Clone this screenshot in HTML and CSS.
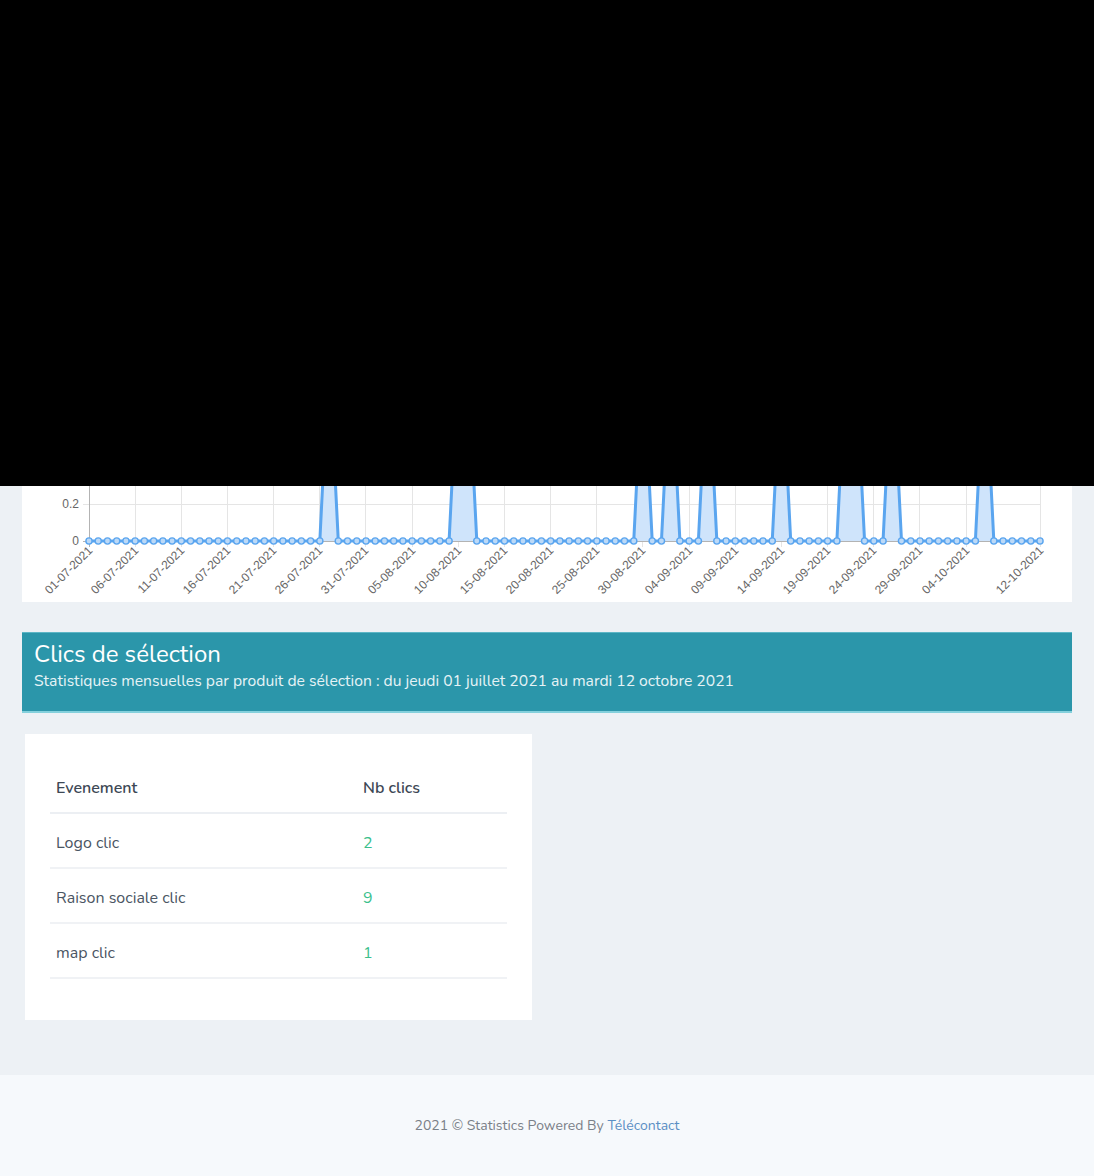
FILE: index.html
```html
<!DOCTYPE html>
<html lang="fr">
<head>
<meta charset="utf-8">
<title>Statistiques</title>
<link rel="stylesheet" href="styles.css">
</head>
<body>
<div class="mask"></div>
<main class="content">
  <section class="chart-card">
    <svg class="chart" width="1050" height="116" viewBox="22 486 1050 116" xmlns="http://www.w3.org/2000/svg">
      <defs>
        <marker id="pt" viewBox="0 0 10 10" refX="5" refY="5" markerWidth="10" markerHeight="10" markerUnits="userSpaceOnUse">
          <circle cx="5" cy="5" r="3.1" fill="#bcd9f7" stroke="#5aa5ef" stroke-width="1.4"/>
        </marker>
      </defs>
      <g class="grid">
        <line x1="89" y1="504.5" x2="1040" y2="504.5"/>
        <line x1="89" y1="467.5" x2="1040" y2="467.5"/>
        <line x1="83" y1="504.5" x2="89" y2="504.5"/>
        <line x1="83" y1="467.5" x2="89" y2="467.5"/>
        <line x1="135.5" y1="440" x2="135.5" y2="547"/>
        <line x1="181.5" y1="440" x2="181.5" y2="547"/>
        <line x1="227.5" y1="440" x2="227.5" y2="547"/>
        <line x1="273.5" y1="440" x2="273.5" y2="547"/>
        <line x1="319.5" y1="440" x2="319.5" y2="547"/>
        <line x1="365.5" y1="440" x2="365.5" y2="547"/>
        <line x1="412.5" y1="440" x2="412.5" y2="547"/>
        <line x1="458.5" y1="440" x2="458.5" y2="547"/>
        <line x1="504.5" y1="440" x2="504.5" y2="547"/>
        <line x1="550.5" y1="440" x2="550.5" y2="547"/>
        <line x1="596.5" y1="440" x2="596.5" y2="547"/>
        <line x1="642.5" y1="440" x2="642.5" y2="547"/>
        <line x1="689.5" y1="440" x2="689.5" y2="547"/>
        <line x1="735.5" y1="440" x2="735.5" y2="547"/>
        <line x1="781.5" y1="440" x2="781.5" y2="547"/>
        <line x1="827.5" y1="440" x2="827.5" y2="547"/>
        <line x1="873.5" y1="440" x2="873.5" y2="547"/>
        <line x1="919.5" y1="440" x2="919.5" y2="547"/>
        <line x1="966.5" y1="440" x2="966.5" y2="547"/>
        <line x1="1040.5" y1="440" x2="1040.5" y2="547"/>
      </g>
      <g class="axis">
        <line x1="89.5" y1="440" x2="89.5" y2="547"/>
        <line x1="83" y1="541.5" x2="1040" y2="541.5"/>
      </g>
      <polygon class="area" points="89,541 319.83,541 329.06,356 338.29,541 449.09,541 458.32,356 467.55,356 476.79,541 633.75,541 642.98,356 652.21,541 661.45,541 670.68,356 679.91,541 698.38,541 707.61,356 716.84,541 772.24,541 781.48,356 790.71,541 836.87,541 846.11,356 855.34,356 864.57,541 883.04,541 892.27,356 901.50,541 975.37,541 984.60,356 993.83,541 1040,541"/>
      <polyline class="line" marker-start="url(#pt)" marker-mid="url(#pt)" marker-end="url(#pt)" points="89.00,541 98.23,541 107.47,541 116.70,541 125.93,541 135.17,541 144.40,541 153.63,541 162.86,541 172.10,541 181.33,541 190.56,541 199.80,541 209.03,541 218.26,541 227.50,541 236.73,541 245.96,541 255.19,541 264.43,541 273.66,541 282.89,541 292.13,541 301.36,541 310.59,541 319.83,541 329.06,356 338.29,541 347.52,541 356.76,541 365.99,541 375.22,541 384.46,541 393.69,541 402.92,541 412.16,541 421.39,541 430.62,541 439.85,541 449.09,541 458.32,356 467.55,356 476.79,541 486.02,541 495.25,541 504.49,541 513.72,541 522.95,541 532.18,541 541.42,541 550.65,541 559.88,541 569.12,541 578.35,541 587.58,541 596.82,541 606.05,541 615.28,541 624.51,541 633.75,541 642.98,356 652.21,541 661.45,541 670.68,356 679.91,541 689.15,541 698.38,541 707.61,356 716.84,541 726.08,541 735.31,541 744.54,541 753.78,541 763.01,541 772.24,541 781.48,356 790.71,541 799.94,541 809.17,541 818.41,541 827.64,541 836.87,541 846.11,356 855.34,356 864.57,541 873.81,541 883.04,541 892.27,356 901.50,541 910.74,541 919.97,541 929.20,541 938.44,541 947.67,541 956.90,541 966.14,541 975.37,541 984.60,356 993.83,541 1003.07,541 1012.30,541 1021.53,541 1030.77,541 1040.00,541"/>
      <g class="ylabels">
        <text x="79" y="505">0.2</text>
        <text x="79" y="542">0</text>
      </g>
      <g class="xlabels">
        <text x="91" y="549" transform="rotate(-45 91 549)">01-07-2021</text>
        <text x="137" y="549" transform="rotate(-45 137 549)">06-07-2021</text>
        <text x="183" y="549" transform="rotate(-45 183 549)">11-07-2021</text>
        <text x="229" y="549" transform="rotate(-45 229 549)">16-07-2021</text>
        <text x="275" y="549" transform="rotate(-45 275 549)">21-07-2021</text>
        <text x="321" y="549" transform="rotate(-45 321 549)">26-07-2021</text>
        <text x="367" y="549" transform="rotate(-45 367 549)">31-07-2021</text>
        <text x="414" y="549" transform="rotate(-45 414 549)">05-08-2021</text>
        <text x="460" y="549" transform="rotate(-45 460 549)">10-08-2021</text>
        <text x="506" y="549" transform="rotate(-45 506 549)">15-08-2021</text>
        <text x="552" y="549" transform="rotate(-45 552 549)">20-08-2021</text>
        <text x="598" y="549" transform="rotate(-45 598 549)">25-08-2021</text>
        <text x="644" y="549" transform="rotate(-45 644 549)">30-08-2021</text>
        <text x="691" y="549" transform="rotate(-45 691 549)">04-09-2021</text>
        <text x="737" y="549" transform="rotate(-45 737 549)">09-09-2021</text>
        <text x="783" y="549" transform="rotate(-45 783 549)">14-09-2021</text>
        <text x="829" y="549" transform="rotate(-45 829 549)">19-09-2021</text>
        <text x="875" y="549" transform="rotate(-45 875 549)">24-09-2021</text>
        <text x="921" y="549" transform="rotate(-45 921 549)">29-09-2021</text>
        <text x="968" y="549" transform="rotate(-45 968 549)">04-10-2021</text>
        <text x="1042" y="549" transform="rotate(-45 1042 549)">12-10-2021</text>
      </g>
    </svg>
  </section>

  <section class="section-head">
    <h2 class="section-title">Clics de sélection</h2>
    <p class="section-sub">Statistiques mensuelles par produit de sélection : du jeudi 01 juillet 2021 au mardi 12 octobre 2021</p>
  </section>

  <div class="row">
    <div class="table-card">
      <table class="stats">
        <thead>
          <tr><th class="col-event">Evenement</th><th>Nb clics</th></tr>
        </thead>
        <tbody>
          <tr><td>Logo clic</td><td class="num">2</td></tr>
          <tr><td>Raison sociale clic</td><td class="num">9</td></tr>
          <tr><td>map clic</td><td class="num">1</td></tr>
        </tbody>
      </table>
    </div>
  </div>
</main>
<footer class="footer">
  <p>2021 © Statistics Powered By <a href="#" class="footer-link">Télécontact</a></p>
</footer>
</body>
</html>
```
FILE: styles.css
```css
* { box-sizing: border-box; }
html, body { margin: 0; padding: 0; }
body {
  background: #edf1f5;
  font-family: "Nunito", "Lato", "Noto Sans", sans-serif;
  color: #4b5563;
}
.mask { height: 486px; background: #000; }
.content { padding: 0 22px; }
.chart-card { background: #fff; height: 116px; }
.chart { display: block; }
.grid line { stroke: #e5e5e5; stroke-width: 1; }
.axis line { stroke: #b3b3b3; stroke-width: 1; }
.area { fill: #cfe4fb; }
.line { fill: none; stroke: #5aa5ef; stroke-width: 3; stroke-linejoin: miter; }
.ylabels text {
  font-family: "Liberation Sans", Arial, sans-serif;
  font-size: 12px; fill: #666; text-anchor: end; dominant-baseline: middle;
}
.xlabels text {
  font-family: "Liberation Sans", Arial, sans-serif;
  font-size: 12px; fill: #666; text-anchor: end; dominant-baseline: middle;
}
.section-head {
  margin-top: 30px;
  background: #2b96aa;
  border-top: 1px solid #5cb6c6;
  border-bottom: 2px solid #84d0dc;
  height: 81px;
  padding: 6px 12px 0;
  color: #fff;
}
.section-title {
  margin: 0;
  font-size: 24px;
  font-weight: 400;
  line-height: 30px;
}
.section-sub {
  margin: 2px 0 0;
  font-size: 15.7px;
  line-height: 20px;
  color: #e6f3f6;
}
.row { display: flex; padding: 21px 0 55px 3px; }
.table-card {
  width: 507px;
  background: #fff;
  padding: 24px 25px 41px;
}
.stats { width: 100%; border-collapse: collapse; font-size: 16px; }
.stats th {
  text-align: left; font-weight: 600; color: #3d4855;
  height: 55px; padding: 5px 6px 0;
  border-bottom: 2px solid #eceff3;
}
.stats td {
  height: 55px; padding: 4px 6px 0;
  border-bottom: 2px solid #f0f2f5;
  color: #4a5563;
}
.stats .col-event { width: 307px; }
.stats .num { color: #3cbf8c; }
.footer {
  background: #f6f9fc;
  height: 101px;
  display: flex; align-items: center; justify-content: center;
}
.footer p { margin: 0; font-size: 14px; color: #7a8088; }
.footer-link { color: #5b8fc4; text-decoration: none; }
```
